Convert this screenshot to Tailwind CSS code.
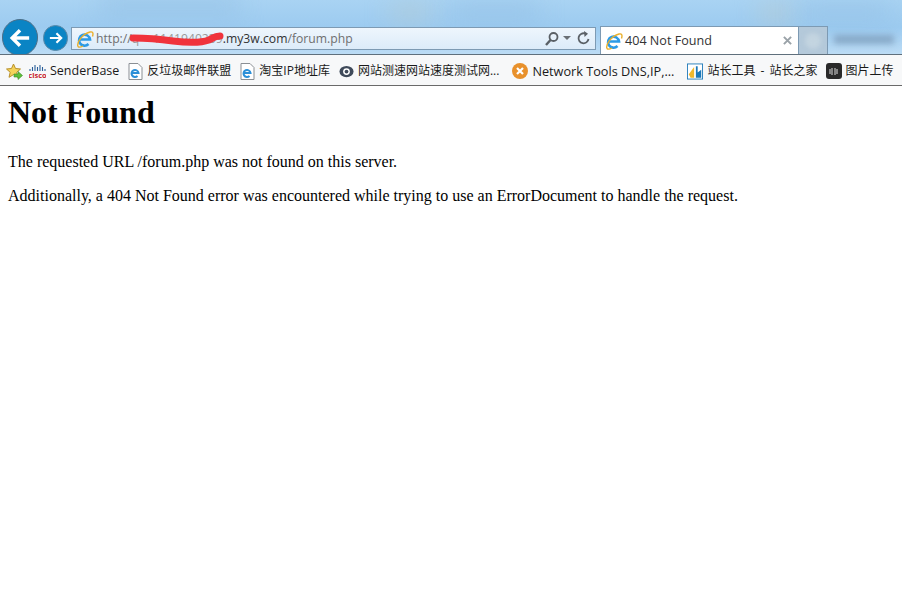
<!DOCTYPE html>
<html>
<head>
	<meta charset="utf-8">
	<script src="https://cdn.jsdelivr.net/npm/@tailwindcss/browser@4"></script>
	<title>404 Not Found</title>
</head>
<body class="w-[902px] h-[590px] overflow-hidden bg-white">

	<!-- window chrome -->
	<div class="h-[54px] relative overflow-hidden bg-gradient-to-b from-[#a9d3f3] via-[#9ccbf0] to-[#bcdcf5] font-['Open_Sans','Noto_Sans',sans-serif]">
		<div class="absolute top-[-6px] left-[100px] w-[140px] h-[22px] bg-[#8ab6dc]/40 blur-md"></div>
		<div class="absolute top-[4px] left-[390px] w-[40px] h-[16px] bg-[#b5c6c8]/60 blur-md"></div>
		<div class="absolute top-[4px] left-[450px] w-[90px] h-[14px] bg-[#85b3dc]/50 blur-md"></div>
		<div class="absolute top-[4px] left-[760px] w-[30px] h-[18px] bg-[#bcc8c4]/60 blur-md"></div>
		<div class="absolute top-[4px] left-[800px] w-[90px] h-[14px] bg-[#85b3dc]/50 blur-md"></div>

		<div class="absolute inset-x-0 top-[19px] flex items-start pl-[2px]">
			<!-- back / forward -->
			<button class="w-[36px] h-[37px] rounded-full bg-[#0a84c4] border border-[#4d6f88] flex items-center justify-center shrink-0">
				<svg class="w-[22px] h-[22px]" viewBox="0 0 24 24" fill="none" stroke="white" stroke-width="3.800"><path d="M22 12H4M12 3.500L3.500 12l8.500 8.500"/></svg>
			</button>
			<button class="w-[25px] h-[26px] rounded-full bg-[#0a84c4] border border-[#5d8aa8] flex items-center justify-center shrink-0 mt-[6px] ml-[5px]">
				<svg class="w-[14px] h-[14px]" viewBox="0 0 16 16" fill="none" stroke="white" stroke-width="2.400"><path d="M1 8h13M8.500 2.500L14 8l-5.500 5.500"/></svg>
			</button>

			<!-- address bar -->
			<div class="w-[525px] h-[23px] mt-[8px] ml-[3px] shrink-0 flex items-center relative bg-gradient-to-b from-[#eef6fd] to-[#dcebf9] border border-[#7d9ab3] text-[12.2px] text-[#6f6f6f]">
				<svg class="w-[18px] h-[18px] ml-[4px] shrink-0" viewBox="0 0 18 18"><path d="M3.500 9.500h10.500a5.500 5.500 0 1 0-1.500 4.500" fill="none" stroke="#2c9ae6" stroke-width="2.600"/><path d="M2 16.500C.500 13 6 4 14 2c3-.800 3.500 1.500 2.500 4.500M2 16.500c1 1.200 3 .600 5-.500" fill="none" stroke="#eab02c" stroke-width="1.400"/></svg>
				<span class="ml-[2px] pt-[1px] whitespace-nowrap flex">http://<span class="inline-flex w-[91px] justify-between text-[#9a9a9a]"><span>q</span><span>1141940239</span></span><span class="text-[#333]">.my3w.com</span>/forum.php</span>
				<svg class="absolute left-[58px] top-[1px] w-[94px] h-[18px]" viewBox="0 0 94 18" fill="none"><path d="M3 9c14 0 26 1 40 3 16 2 28 2 36-1 4-2 6-4 11-4" stroke="#f0333c" stroke-width="7" stroke-linecap="round"/></svg>
				<svg class="absolute left-[472px] top-[3px] w-[16px] h-[16px]" viewBox="0 0 16 16" fill="none" stroke="#5a6066"><circle cx="9.500" cy="6" r="4" stroke-width="1.800"/><path d="M6.500 9L2 14" stroke-width="2.400"/></svg>
				<svg class="absolute left-[491px] top-[8px] w-[8px] h-[4px]" viewBox="0 0 8 4"><path d="M0 0h8L4 4z" fill="#6a7076"/></svg>
				<svg class="absolute left-[505px] top-[3px] w-[14px] h-[14px]" viewBox="0 0 14 14" fill="none" stroke="#5a6066" stroke-width="1.800"><path d="M11.500 8A5 5 0 1 1 8 2.500"/><path d="M7 0l4 2.800L7.500 6z" fill="#5a6066" stroke="none"/></svg>
			</div>

			<!-- tabs -->
			<div class="w-[199px] h-[28px] mt-[7px] ml-[4px] shrink-0 flex items-center bg-white border border-b-0 border-[#7d9ab3] text-[12.6px] text-[#333] relative">
				<svg class="w-[18px] h-[18px] ml-[4px] shrink-0" viewBox="0 0 18 18"><path d="M3.500 9.500h10.500a5.500 5.500 0 1 0-1.500 4.500" fill="none" stroke="#2c9ae6" stroke-width="2.600"/><path d="M2 16.500C.500 13 6 4 14 2c3-.800 3.500 1.500 2.500 4.500M2 16.500c1 1.200 3 .600 5-.500" fill="none" stroke="#eab02c" stroke-width="1.400"/></svg>
				<span class="ml-[2px] pt-[2px] whitespace-nowrap">404 Not Found</span>
				<svg class="absolute right-[6px] top-[9px] w-[9px] h-[9px]" viewBox="0 0 10 10" stroke="#9aa2a8" stroke-width="2.200"><path d="M1 1l8 8M9 1l-8 8"/></svg>
			</div>
			<div class="w-[29px] h-[28px] mt-[7px] shrink-0 bg-[#b4c9da] border border-l-0 border-b-0 border-[#7d9ab3] flex items-center justify-center">
				<div class="w-[16px] h-[16px] rounded-full bg-[#c3d4e0] blur-[2px]"></div>
			</div>
			<div class="w-[60px] h-[9px] mt-[16px] ml-[6px] shrink-0 bg-[#6f8eab]/60 blur-[3px]"></div>
		</div>
	</div>

	<!-- favorites bar -->
	<div class="h-[32px] flex items-center pt-[2px] bg-[#f7f8f9] border-t border-t-[#5f6f7c] border-b border-b-[#6a6a6a] text-[12px] leading-none text-[#1a1a1a] whitespace-nowrap font-['Open_Sans','Noto_Sans','Noto_Sans_CJK_SC',sans-serif]">
		<svg class="w-[17px] h-[17px] ml-[6px] shrink-0" viewBox="0 0 17 17"><path d="M7.500 1l2 4.500 5 .500-3.800 3.300 1.200 5-4.400-2.700L3 14.300l1.200-5L.500 6l5-.500z" fill="#f4d35a" stroke="#b8902a"/><path d="M8 11h4V8.500l4.500 4-4.500 4V14H8z" fill="#5cbf3a" stroke="#3c8a2a" stroke-width=".6"/></svg>
		<svg class="w-[17px] h-[14px] ml-[6px] shrink-0" viewBox="0 0 17 14"><path d="M1 5v2M3.500 3v4M6 1v6M8.500 3v4M11 1v6M13.500 3v4M16 5v2" stroke="#2a5f9a" stroke-width="1.100"/><text x="8.500" y="13.500" text-anchor="middle" font-size="7.500" font-weight="700" fill="#c8242c">cisco</text></svg>
		<span class="ml-[4px] text-[12.5px]">SenderBase</span>
		<svg class="w-[15px] h-[17px] ml-[9px] shrink-0" viewBox="0 0 15 17"><path d="M1 .500h9l4 4v12H1z" fill="white" stroke="#8a8f94"/><path d="M3.500 10h7a3.500 3.500 0 1 0-1 3" fill="none" stroke="#2b8fd8" stroke-width="2"/></svg>
		<span class="ml-[4px]">反垃圾邮件联盟</span>
		<svg class="w-[15px] h-[17px] ml-[9px] shrink-0" viewBox="0 0 15 17"><path d="M1 .500h9l4 4v12H1z" fill="white" stroke="#8a8f94"/><path d="M3.500 10h7a3.500 3.500 0 1 0-1 3" fill="none" stroke="#2b8fd8" stroke-width="2"/></svg>
		<span class="ml-[4px]">淘宝IP地址库</span>
		<svg class="w-[15px] h-[15px] ml-[9px] shrink-0" viewBox="0 0 16 16"><ellipse cx="8" cy="8" rx="7.500" ry="6" fill="#3f4a5a"/><circle cx="8" cy="8" r="3.600" fill="white"/><circle cx="8" cy="8" r="2" fill="#3f4a5a"/></svg>
		<span class="ml-[4px]">网站测速网站速度测试网...</span>
		<svg class="w-[16px] h-[16px] ml-[13px] shrink-0" viewBox="0 0 16 16"><circle cx="8" cy="8" r="8" fill="#e8912c"/><path d="M5 5l6 6M11 5l-6 6" stroke="white" stroke-width="2.200"/></svg>
		<span class="ml-[4px] text-[12.7px]">Network Tools DNS,IP,...</span>
		<svg class="w-[16px] h-[17px] ml-[13px] shrink-0" viewBox="0 0 18 18"><rect x=".500" y=".500" width="17" height="17" fill="white" stroke="#1c78b8"/><path d="M2 12L8 4v12H4z" fill="#f0b82c"/><path d="M10 3h2v7l4-3v9h-6z" fill="#1c78b8"/></svg>
		<span class="ml-[4px]">站长工具<span class="px-[2px]"> - </span>站长之家</span>
		<div class="w-[16px] h-[16px] ml-[8px] shrink-0 rounded-[3px] bg-[#2a2a2a] flex items-center justify-center">
			<svg class="w-[9px] h-[9px]" viewBox="0 0 9 9" stroke="#ddd"><path d="M1 2v5M3 1v7M6 1v7M8 2v5"/></svg>
		</div>
		<span class="ml-[4px]">图片上传</span>
	</div>

	<!-- page content -->
	<div class="pt-[8px] px-[8px] text-black font-['Liberation_Serif',serif]">
		<h1 class="text-[32px] leading-[37px] font-bold">Not Found</h1>
		<p class="text-[16px] leading-[18px] mt-[22px]">The requested URL /forum.php was not found on this server.</p>
		<p class="text-[16px] leading-[18px] mt-[16px]">Additionally, a 404 Not Found error was encountered while trying to use an ErrorDocument to handle the request.</p>
	</div>
</body>
</html>
